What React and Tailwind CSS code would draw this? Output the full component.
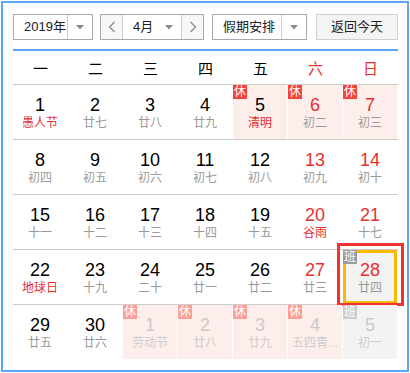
import React from "react";

const font = { fontFamily: '"Liberation Sans", "Noto Sans CJK SC", sans-serif' };

const rows = [
  [
    { n: 1, l: "愚人节", lred: true },
    { n: 2, l: "廿七" },
    { n: 3, l: "廿八" },
    { n: 4, l: "廿九" },
    { n: 5, l: "清明", lred: true, badge: "休" },
    { n: 6, l: "初二", red: true, badge: "休" },
    { n: 7, l: "初三", red: true, badge: "休" },
  ],
  [
    { n: 8, l: "初四" },
    { n: 9, l: "初五" },
    { n: 10, l: "初六" },
    { n: 11, l: "初七" },
    { n: 12, l: "初八" },
    { n: 13, l: "初九", red: true },
    { n: 14, l: "初十", red: true },
  ],
  [
    { n: 15, l: "十一" },
    { n: 16, l: "十二" },
    { n: 17, l: "十三" },
    { n: 18, l: "十四" },
    { n: 19, l: "十五" },
    { n: 20, l: "谷雨", red: true, lred: true },
    { n: 21, l: "十七", red: true },
  ],
  [
    { n: 22, l: "地球日", lred: true },
    { n: 23, l: "十九" },
    { n: 24, l: "二十" },
    { n: 25, l: "廿一" },
    { n: 26, l: "廿二" },
    { n: 27, l: "廿三", red: true },
    { n: 28, l: "廿四", red: true, badge: "班", sel: true },
  ],
  [
    { n: 29, l: "廿五" },
    { n: 30, l: "廿六" },
    { n: 1, l: "劳动节", badge: "休", next: true },
    { n: 2, l: "廿八", badge: "休", next: true },
    { n: 3, l: "廿九", badge: "休", next: true },
    { n: 4, l: "五四青...", badge: "休", next: true },
    { n: 5, l: "初一", badge: "班", next: true },
  ],
];

function Caret() {
  return (
    <svg width="8" height="5" viewBox="0 0 8 5">
      <path d="M0 0 L8 0 L4 4.5 Z" fill="#8a8a8a" />
    </svg>
  );
}

function Chevron({ dir }) {
  return (
    <svg width="8" height="12" viewBox="0 0 8 12">
      <path
        d={dir === "left" ? "M6.5 1 L1.5 6 L6.5 11" : "M1.5 1 L6.5 6 L1.5 11"}
        fill="none"
        stroke="#8a8a8a"
        strokeWidth="1.3"
      />
    </svg>
  );
}

function Cell({ d }) {
  let bg = "";
  if (d.badge === "休") bg = "bg-[#fdeeec]";
  if (d.badge === "班") bg = "bg-[#f3f3f3]";

  let numColor = d.red ? "text-[#e6302e]" : "text-black";
  let lunColor = d.lred ? "text-[#e6302e]" : "text-[#9a9a9a]";
  if (d.next) {
    numColor = "text-[#c9c9c9]";
    lunColor = "text-[#cdcdcd]";
  }

  let badgeBg = "bg-[#f5423a]";
  if (d.badge === "休" && d.next) badgeBg = "bg-[#fb9f98]";
  if (d.badge === "班") badgeBg = d.next ? "bg-[#cbcbcb]" : "bg-[#9b9b9b]";

  return (
    <div className={`relative h-[54px] mr-[1px] ${bg}`}>
      {d.sel && (
        <>
          <div className="absolute inset-0 border-[3px] border-[#fbb800]"></div>
          <div className="absolute left-[-6px] top-[-7px] w-[67px] h-[63px] border-[3px] border-[#f53232]"></div>
        </>
      )}
      {d.badge && (
        <div
          className={`absolute left-0 top-0 z-10 w-[14px] h-[14px] flex items-center justify-center text-white text-[12px] leading-none ${badgeBg}`}
        >
          {d.badge}
        </div>
      )}
      <div className="flex flex-col items-center pt-[10px]">
        <div className={`text-[18px] leading-[20px] ${numColor}`}>{d.n}</div>
        <div className={`text-[12px] leading-[16px] whitespace-nowrap ${lunColor}`}>{d.l}</div>
      </div>
    </div>
  );
}

export default function App() {
  const week = ["一", "二", "三", "四", "五", "六", "日"];

  return (
    <div className="p-[1px] bg-white" style={font}>
      <div className="w-[408px] h-[371px] border-2 border-[#5aa6f7] pt-[11px] pl-[10px] bg-white">
        <div className="w-[385px]">
          {/* header */}
          <div className="flex items-center h-[26px] text-[13px] text-[#222]">
            <div className="flex h-full w-[80px] border border-[#a8a8a8]">
              <div className="flex-1 flex items-center pl-[10px]">2019年</div>
              <div className="w-[25px] border-l border-[#d0d0d0] flex items-center justify-center">
                <Caret />
              </div>
            </div>
            <div className="flex h-full w-[104px] ml-[7px] border border-[#a8a8a8]">
              <div className="w-[22px] border-r border-[#d0d0d0] flex items-center justify-center bg-[#f7f7f7]">
                <Chevron dir="left" />
              </div>
              <div className="flex-1 flex items-center justify-between pl-[10px] pr-[8px]">
                <span>4月</span>
                <Caret />
              </div>
              <div className="w-[22px] border-l border-[#d0d0d0] flex items-center justify-center bg-[#f7f7f7]">
                <Chevron dir="right" />
              </div>
            </div>
            <div className="flex h-full w-[95px] ml-[8px] border border-[#a8a8a8]">
              <div className="flex-1 flex items-center pl-[10px]">假期安排</div>
              <div className="w-[25px] border-l border-[#d0d0d0] flex items-center justify-center">
                <Caret />
              </div>
            </div>
            <button className="h-full w-[82px] ml-[9px] border border-[#cfcfcf] bg-[#f4f4f4] text-[13px] text-[#222]">
              返回今天
            </button>
          </div>

          <div className="mt-[9px] h-[2px] bg-[#5aa6f7]"></div>

          {/* week labels */}
          <div className="grid grid-cols-7 h-[34px] pt-[3px] border-b border-[#cccccc] text-[15px]">
            {week.map((w, i) => (
              <div
                key={w}
                className={`flex items-center justify-center ${i > 4 ? "text-[#e6302e]" : "text-black"}`}
              >
                {w}
              </div>
            ))}
          </div>

          {/* days */}
          {rows.map((r, ri) => (
            <div
              key={ri}
              className={`grid grid-cols-7 ${ri < rows.length - 1 ? "border-b border-[#cccccc]" : ""}`}
            >
              {r.map((d, di) => (
                <Cell key={di} d={d} />
              ))}
            </div>
          ))}
        </div>
      </div>
    </div>
  );
}
